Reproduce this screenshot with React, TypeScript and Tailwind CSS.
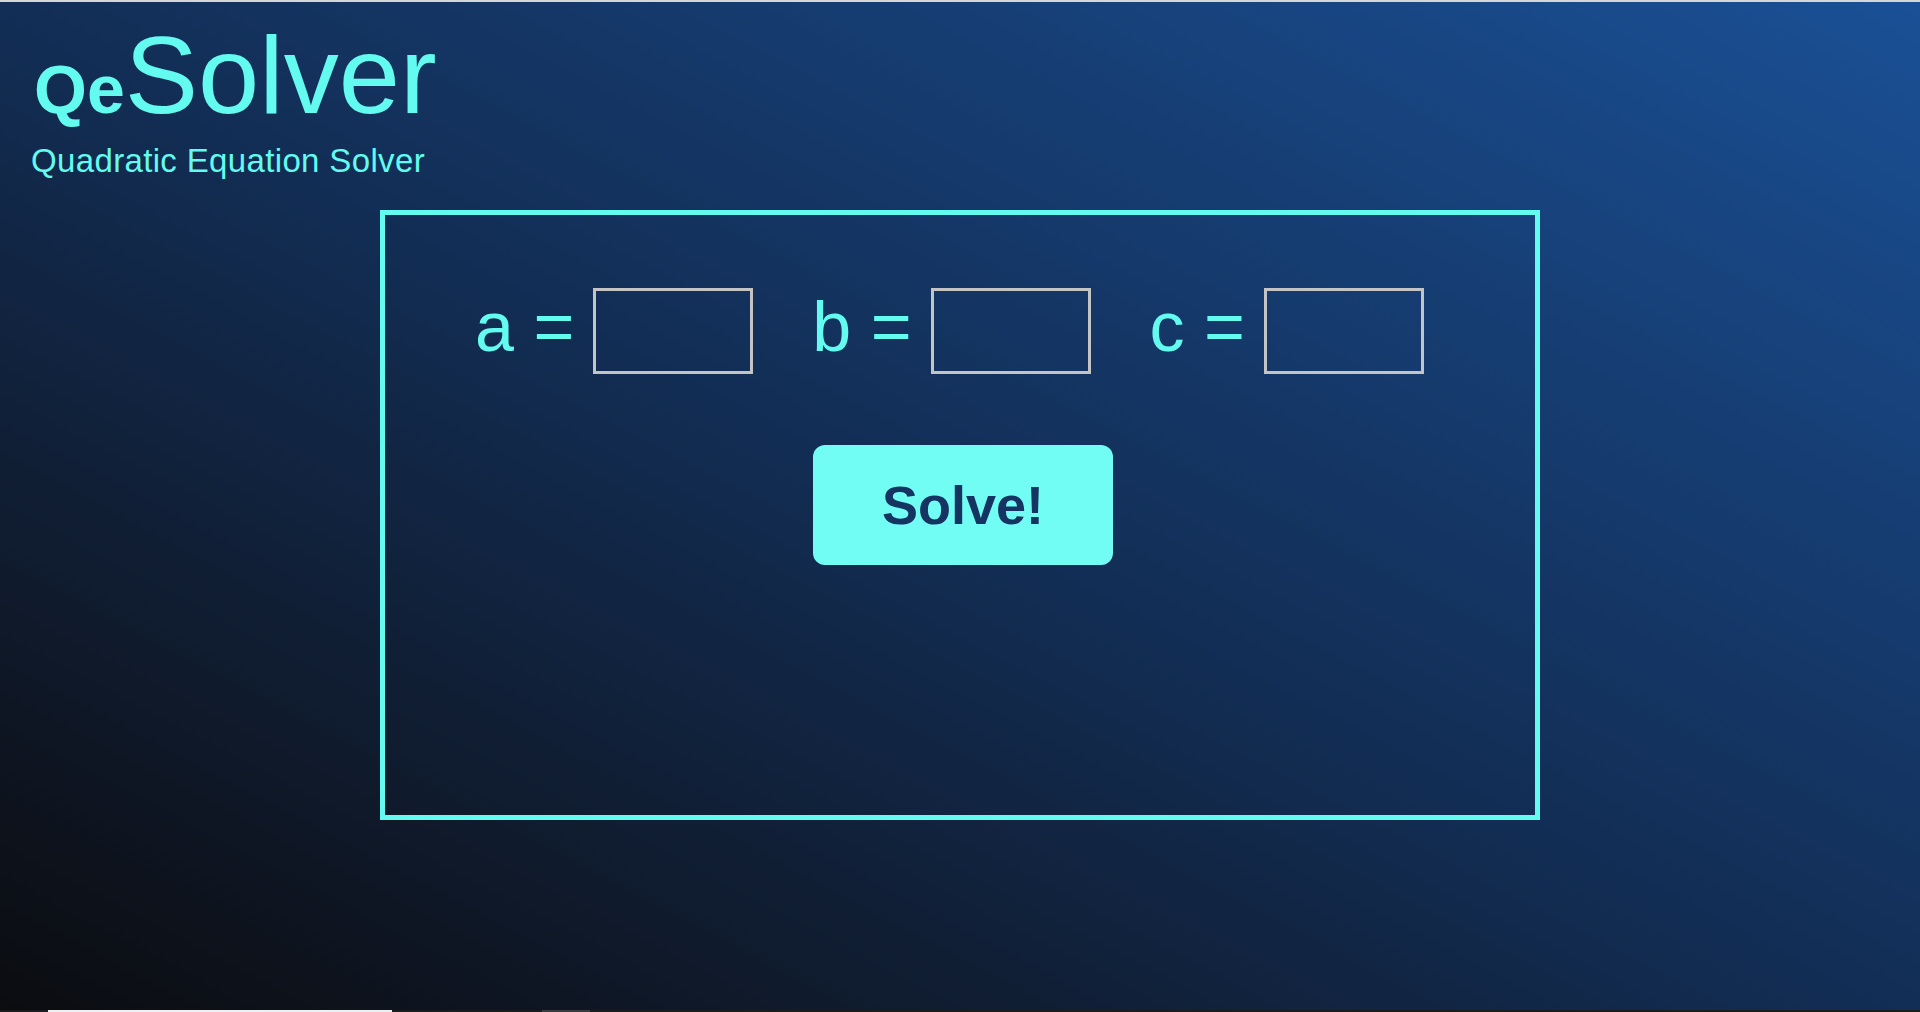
import React from "react";

function Field({ label }: { label: string }) {
  return (
    <div className="flex items-center">
      <span className="text-[70px] leading-none text-[#63fbef] pb-[8px] mr-[19px] whitespace-pre">
        {label}
      </span>
      <input
        type="text"
        className="w-[160px] h-[86px] border-[3px] border-[#c4c4c4] bg-transparent outline-none text-[#63fbef] text-[40px] px-2"
      />
    </div>
  );
}

export default function App() {
  return (
    <div className="w-[1920px] h-[1012px] flex flex-col overflow-hidden font-['Liberation_Sans',Arial,sans-serif]">
      <div className="h-[2px] bg-[#d6d6d6] shrink-0" />
      <div className="flex-1 bg-linear-to-tr from-[#0b0c10] via-[#122e56] to-[#1a5096] flex flex-col">
        <header className="pl-[31px] pt-[18px] text-[#63fbef]">
          <div className="text-[110px] leading-none">
            <span className="text-[68px] font-bold ml-[3px]">Qe</span>Solver
          </div>
          <div className="text-[33px] leading-none mt-[14px] tracking-[0.35px]">
            Quadratic Equation Solver
          </div>
        </header>
        <section className="mt-[33px] mx-auto w-[1160px] h-[610px] border-[5px] border-[#63fbef] flex flex-col">
          <div className="flex items-center pl-[90px] mt-[73px] gap-[59px]">
            <Field label="a =" />
            <Field label="b =" />
            <Field label="c =" />
          </div>
          <div className="flex justify-center mt-[71px] pl-[6px]">
            <button className="w-[300px] h-[120px] rounded-[12px] bg-[#72fdf4] text-[#153462] text-[54px] font-bold leading-none flex items-center justify-center">
              Solve!
            </button>
          </div>
        </section>
      </div>
      <div className="h-[2px] bg-[#1c1c1c] shrink-0 flex">
        <div className="ml-[48px] w-[344px] bg-[#f0f0f0]" />
        <div className="ml-[150px] w-[48px] bg-[#3c3c3c]" />
      </div>
    </div>
  );
}
